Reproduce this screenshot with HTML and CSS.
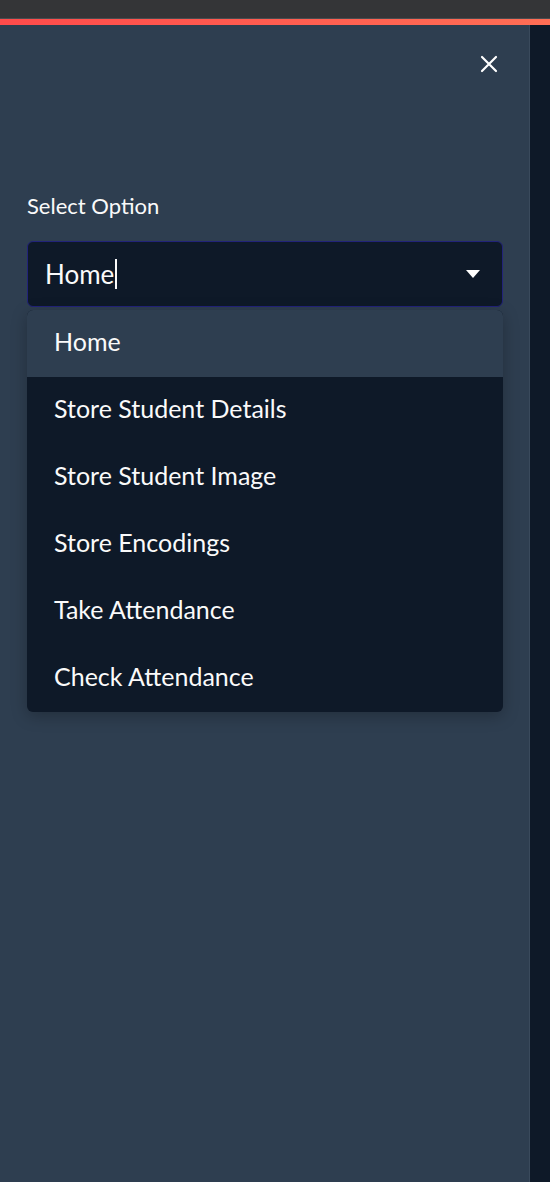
FILE: index.html
```html
<!DOCTYPE html>
<html>
<head>
<meta charset="utf-8">
<link rel="stylesheet" href="styles.css">
</head>
<body>
<div class="topbar"></div>
<div class="decoration"></div>
<div class="layout">
  <aside class="sidebar">
    <div class="close-row">
      <button class="close-btn" aria-label="Close">
        <svg width="20" height="20" viewBox="0 0 20 20"><path d="M3 3 L17 17 M17 3 L3 17" stroke="#ffffff" stroke-width="2.2" stroke-linecap="round" fill="none"/></svg>
      </button>
    </div>
    <label class="field-label">Select Option</label>
    <div class="select-wrap">
      <div class="select-box">
        <span class="select-value">Home</span><span class="cursor"></span>
        <svg class="caret" width="16" height="10" viewBox="0 0 16 10"><path d="M1 1 L15 1 L8 9 Z" fill="#ffffff"/></svg>
      </div>
      <ul class="menu">
        <li class="menu-item active">Home</li>
        <li class="menu-item">Store Student Details</li>
        <li class="menu-item">Store Student Image</li>
        <li class="menu-item">Store Encodings</li>
        <li class="menu-item">Take Attendance</li>
        <li class="menu-item">Check Attendance</li>
      </ul>
    </div>
  </aside>
  <main class="main"></main>
</div>
</body>
</html>
```

FILE: styles.css
```css
html, body {
  margin: 0;
  padding: 0;
  height: 100%;
}
body {
  background: #0e1928;
  font-family: Lato, "Noto Sans", sans-serif;
  color: #fafafa;
  overflow: hidden;
}
.topbar {
  height: 18px;
  background: #343537;
  border-bottom: 1px solid #4a4c4f;
}
.decoration {
  height: 6px;
  background: linear-gradient(90deg, #ff4b4b, #ff6e55);
}
.layout {
  display: flex;
  height: calc(100% - 25px);
}
.sidebar {
  width: 530px;
  flex: none;
  background: #2e3e50;
  box-sizing: border-box;
  padding: 0 26px 0 27px;
  border-right: 1px solid #3a4a5c;
}
.main {
  flex: 1;
  background: #0e1928;
}
.close-row {
  display: flex;
  justify-content: flex-end;
  padding-top: 29px;
  padding-right: 4px;
}
.close-btn {
  background: none;
  border: none;
  padding: 0;
  width: 20px;
  height: 20px;
  display: block;
}
.close-btn svg { display: block; }
.field-label {
  display: block;
  margin-top: 119px;
  font-size: 22px;
  line-height: 26px;
  color: #fafafa;
}
.select-wrap {
  position: relative;
  margin-top: 22px;
}
.select-box {
  height: 66px;
  box-sizing: border-box;
  background: #0e1928;
  border: 1px solid #22237a;
  border-radius: 6px;
  display: flex;
  align-items: center;
  padding: 0 21px 0 17px;
}
.select-value {
  font-size: 26px;
  color: #fafafa;
}
.cursor {
  width: 2px;
  height: 30px;
  background: #fafafa;
  margin-left: 1px;
}
.caret {
  margin-left: auto;
}
.menu {
  position: absolute;
  left: 0;
  right: 0;
  top: 69px;
  margin: 0;
  padding: 0;
  list-style: none;
  background: #0e1928;
  border-radius: 6px;
  overflow: hidden;
  box-shadow: 0 4px 16px rgba(0, 0, 0, 0.25);
}
.menu-item {
  height: 67px;
  box-sizing: border-box;
  padding: 0 0 5px 27px;
  display: flex;
  align-items: center;
  font-size: 25px;
  color: #fafafa;
}
.menu-item.active {
  background: #2e3e50;
}
```
